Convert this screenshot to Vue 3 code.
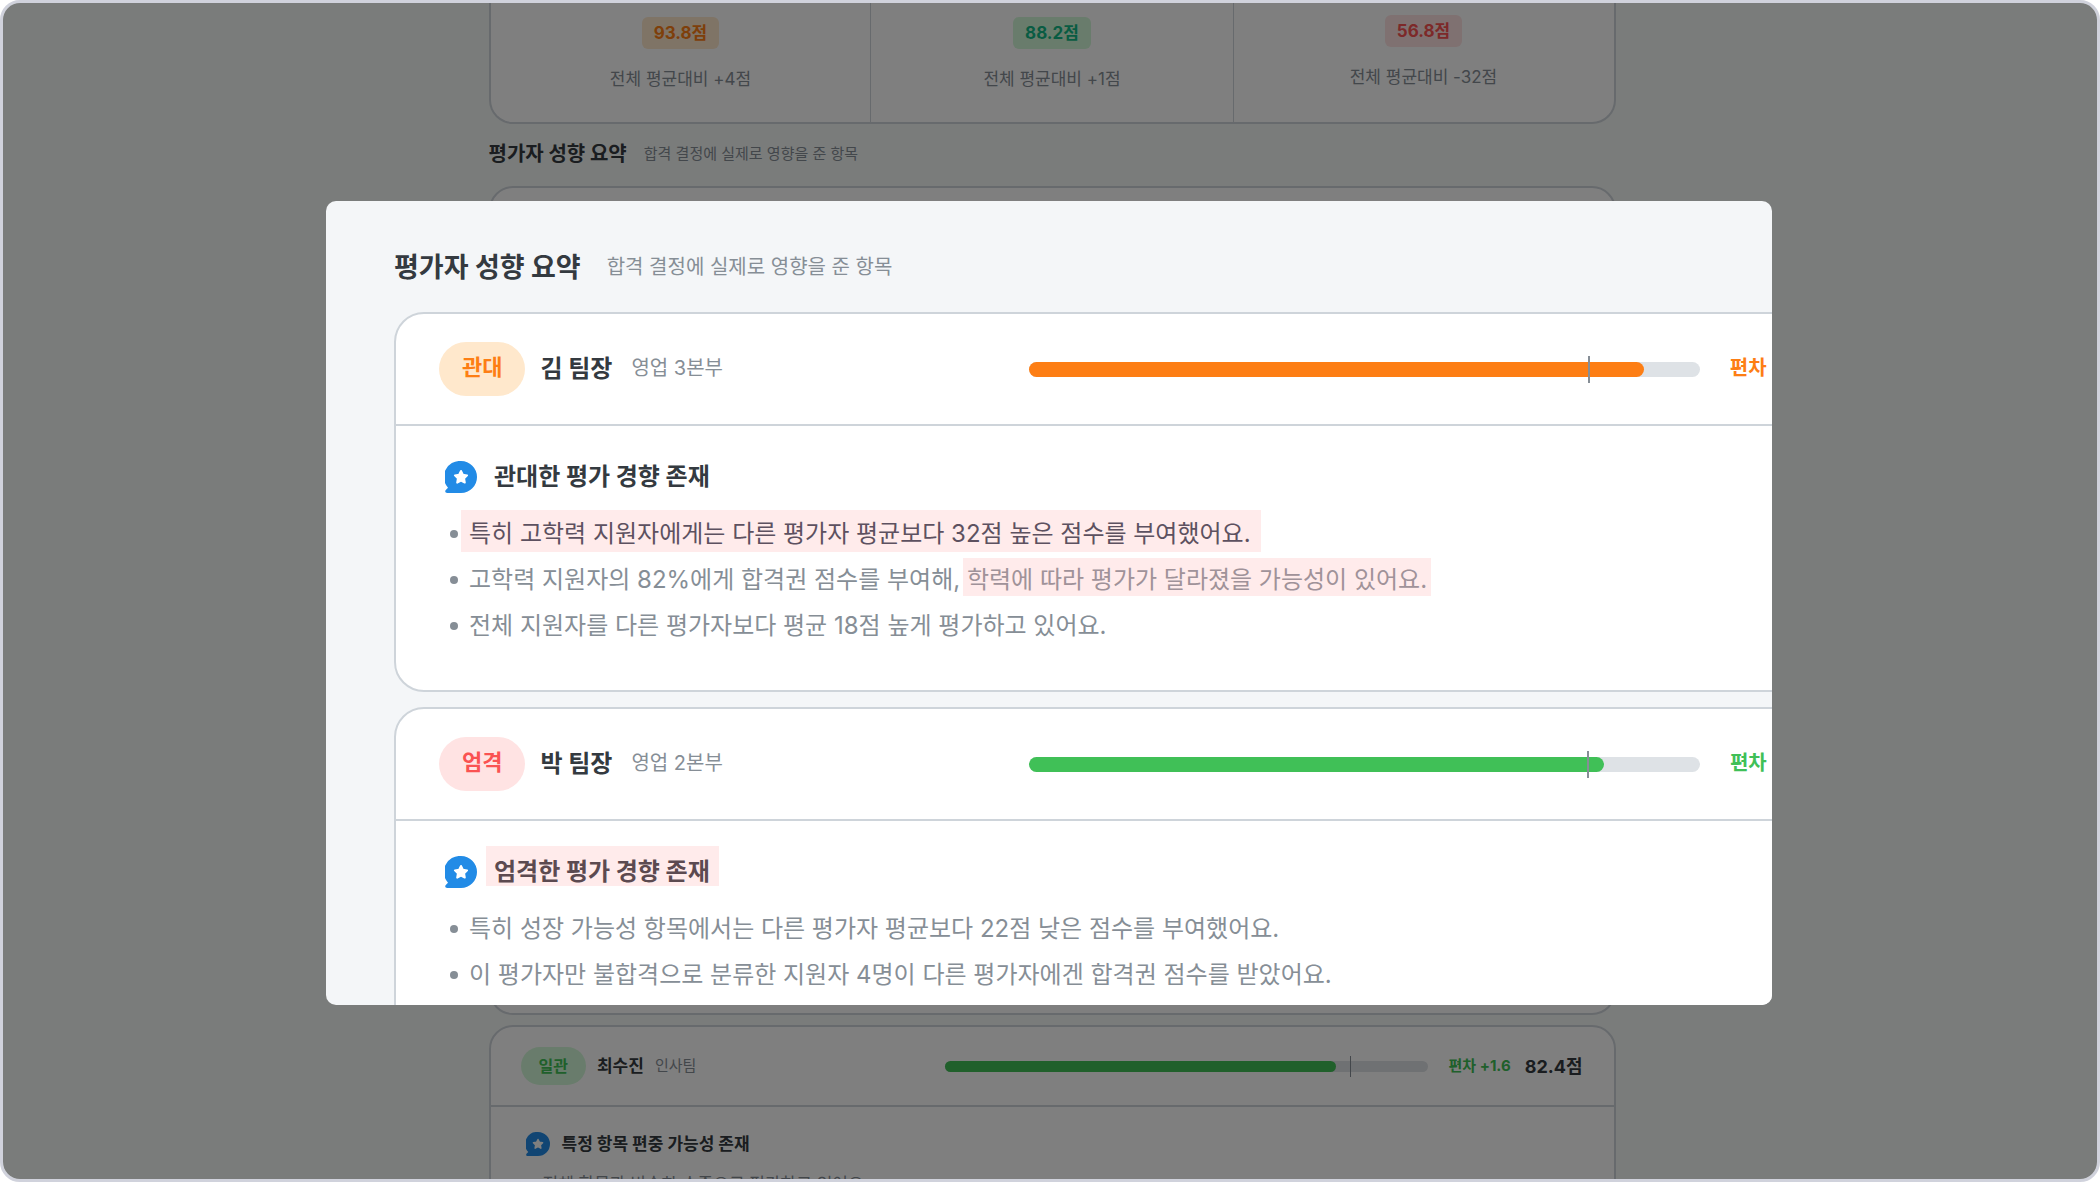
<template>
  <div class="screen">
    <div class="page">
      <div class="scores">
        <div v-for="item in scores" :key="item.score" class="score">
          <span class="chip" :class="item.color">{{ item.score }}점</span>
          <span class="diff">전체 평균대비 {{ item.diff }}점</span>
        </div>
      </div>

      <div class="heading">
        <h2>평가자 성향 요약</h2>
        <p>합격 결정에 실제로 영향을 준 항목</p>
      </div>

      <div class="card spacer"></div>

      <div class="card">
        <div class="card-head">
          <span class="tag green">일관</span>
          <strong class="name">최수진</strong>
          <span class="dept">인사팀</span>
          <div class="bar">
            <div class="fill green" :style="{ width: '81%' }"></div>
            <div class="avg" :style="{ left: '84%' }"></div>
          </div>
          <span class="gap green">편차 +1.6</span>
          <strong class="total">82.4점</strong>
        </div>
        <div class="card-body">
          <div class="title">
            <svg viewBox="0 0 32 32" aria-hidden="true">
              <path class="bubble" d="M16 0a16 16 0 1 1 0 32H2.300c-2 0-2.800-2-1.300-3.300l2-2A16 16 0 0 1 16 0z" />
              <path class="star" d="M16 10l1.900 3.800 4.200.6-3 3 .7 4.200L16 19.600l-3.800 2 .7-4.200-3-3 4.200-.6z" />
            </svg>
            <h3>특정 항목 편중 가능성 존재</h3>
          </div>
          <ul>
            <li>전체 항목과 비슷한 수준으로 평가하고 있어요.</li>
          </ul>
        </div>
      </div>
    </div>

    <div class="backdrop"></div>

    <div class="modal" role="dialog" aria-labelledby="modal-title">
      <div class="heading">
        <h2 id="modal-title">평가자 성향 요약</h2>
        <p>합격 결정에 실제로 영향을 준 항목</p>
      </div>

      <div v-for="rater in raters" :key="rater.name" class="card">
        <div class="card-head">
          <span class="tag" :class="rater.tagColor">{{ rater.tag }}</span>
          <strong class="name">{{ rater.name }}</strong>
          <span class="dept">{{ rater.dept }}</span>
          <div class="bar">
            <div class="fill" :class="rater.color" :style="{ width: rater.fill + '%' }"></div>
            <div class="avg" :style="{ left: rater.avg + '%' }"></div>
          </div>
          <span class="gap" :class="rater.color">편차 {{ rater.gap }}</span>
          <strong class="total">{{ rater.score }}점</strong>
        </div>
        <div class="card-body">
          <div class="title">
            <svg viewBox="0 0 32 32" aria-hidden="true">
              <path class="bubble" d="M16 0a16 16 0 1 1 0 32H2.300c-2 0-2.800-2-1.300-3.300l2-2A16 16 0 0 1 16 0z" />
              <path class="star" d="M16 10l1.900 3.800 4.200.6-3 3 .7 4.200L16 19.600l-3.800 2 .7-4.200-3-3 4.200-.6z" />
            </svg>
            <h3><mark v-if="rater.markTitle" class="strong">{{ rater.title }}</mark><template v-else>{{ rater.title }}</template></h3>
          </div>
          <ul>
            <li v-for="line in rater.lines" :key="line.text + line.mark">
              <span>{{ line.text }}<mark v-if="line.mark" :class="{ strong: line.strong }">{{ line.mark }}</mark></span>
            </li>
          </ul>
        </div>
      </div>
    </div>
  </div>
</template>

<script setup>
import { ref } from 'vue';

const scores = ref([
  { score: '93.8', diff: '+4', color: 'orange' },
  { score: '88.2', diff: '+1', color: 'teal' },
  { score: '56.8', diff: '-32', color: 'red' },
]);

const raters = ref([
  {
    tag: '관대',
    tagColor: 'orange',
    name: '김 팀장',
    dept: '영업 3본부',
    color: 'orange',
    fill: 91.7,
    avg: 83.4,
    gap: '+8.3',
    score: '91.7',
    title: '관대한 평가 경향 존재',
    lines: [
      { text: '', mark: '특히 고학력 지원자에게는 다른 평가자 평균보다 32점 높은 점수를 부여했어요.', strong: true },
      { text: '고학력 지원자의 82%에게 합격권 점수를 부여해, ', mark: '학력에 따라 평가가 달라졌을 가능성이 있어요.' },
      { text: '전체 지원자를 다른 평가자보다 평균 18점 높게 평가하고 있어요.' },
    ],
  },
  {
    tag: '엄격',
    tagColor: 'red',
    name: '박 팀장',
    dept: '영업 2본부',
    color: 'green',
    fill: 85.7,
    avg: 83.2,
    gap: '-2.3',
    score: '85.7',
    title: '엄격한 평가 경향 존재',
    markTitle: true,
    lines: [
      { text: '특히 성장 가능성 항목에서는 다른 평가자 평균보다 22점 낮은 점수를 부여했어요.' },
      { text: '이 평가자만 불합격으로 분류한 지원자 4명이 다른 평가자에겐 합격권 점수를 받았어요.' },
    ],
  },
]);
</script>

<style>
body {
  background: #fff;
}
</style>

<style scoped>
.screen {
  position: relative;
  box-sizing: border-box;
  height: 100vh;
  border: 3px solid #d0d2dc;
  border-radius: 20px;
  overflow: hidden;
  background: #f4f8f6;
  color: #343a40;
  font-family: Inter, 'Noto Sans CJK KR', sans-serif;
}

h2, h3, p, ul {
  margin: 0;
  padding: 0;
}

.page {
  width: 1127px;
  margin: 0 auto;
  padding-left: 4px;
}

.scores {
  display: grid;
  grid-template-columns: 381fr 363fr 382fr;
  height: 121px;
  box-sizing: border-box;
  border: 2px solid #ced4da;
  border-top: 0;
  border-radius: 0 0 24px 24px;
  background: #fff;
}

.score {
  display: flex;
  flex-direction: column;
  align-items: center;
  gap: 17px;
  padding-top: 14px;
  font-size: 17px;
  line-height: 26px;
}

.score + .score {
  border-left: 1px solid #ced4da;
}

.score:last-child {
  padding-top: 12px;
}

.chip {
  padding: 3px 12px;
  border-radius: 6px;
  font-weight: 700;
}

.diff {
  color: #868e96;
}

.heading {
  display: flex;
  align-items: center;
  white-space: nowrap;
}

.heading p {
  color: #868e96;
}

.page .heading {
  box-sizing: border-box;
  gap: 17px;
  height: 62px;
  padding-bottom: 6px;
}

.page .heading h2 {
  font-size: 20px;
}

.page .heading p {
  font-size: 15px;
}

.card {
  box-sizing: border-box;
  border: 2px solid #ced4da;
  border-radius: 24px;
  background: #fff;
}

.spacer {
  height: 829px;
  margin-bottom: 10px;
}

.card-head {
  display: flex;
  align-items: center;
  height: 78px;
  padding: 0 31px 0 30px;
  border-bottom: 2px solid #ced4da;
  white-space: nowrap;
}

.tag {
  padding: 6px 18px;
  border-radius: 19px;
  font-size: 16px;
  line-height: 26px;
  font-weight: 700;
}

.name {
  margin: 0 11px;
  font-size: 17px;
}

.dept {
  color: #868e96;
  font-size: 15px;
}

.name,
.dept,
.gap,
.total {
  padding-bottom: 3px;
}

.bar {
  position: relative;
  width: 483px;
  height: 11px;
  margin-left: auto;
  border-radius: 8px;
  background: #dee2e6;
}

.fill {
  height: 100%;
  border-radius: 8px;
}

.avg {
  position: absolute;
  top: -5px;
  bottom: -5px;
  width: 1px;
  background: #868e96;
}

.gap {
  margin: 0 14px 0 21px;
  font-size: 15px;
  font-weight: 700;
}

.total {
  font-size: 18px;
}

.card-body {
  padding: 24px 35px;
}

.title {
  display: flex;
  align-items: center;
  gap: 12px;
}

.title svg {
  width: 24px;
  height: 24px;
}

.title h3 {
  font-size: 17px;
  line-height: 26px;
}

.bubble {
  fill: #228be6;
}

.star {
  fill: #fff;
  stroke: #fff;
  stroke-width: 2;
  stroke-linejoin: round;
}

ul {
  list-style: none;
  color: #868e96;
  font-size: 17px;
  white-space: nowrap;
}

li {
  display: flex;
  align-items: center;
  line-height: 34px;
}

.page ul {
  margin-top: 10px;
}

li::before {
  content: '';
  width: 8px;
  height: 8px;
  margin-right: 11px;
  border-radius: 50%;
  background: #868e96;
}

.page li::before {
  width: 6px;
  height: 6px;
}

mark {
  margin: 0 -4px;
  padding: 7px 4px 2px;
  background: #ffebeb;
  color: #a09299;
}

mark.strong {
  margin: 0 -8px;
  padding: 9px 10px 4px 8px;
  color: #5d5160;
}

h3 mark.strong {
  padding: 11px 9px 0 8px;
  color: #5c4a50;
}

.fill.orange {
  background: #fd7e14;
}

.fill.green {
  background: #40c057;
}

.gap.orange {
  color: #fd7e14;
}

.gap.green {
  color: #40c057;
}

.tag.orange,
.chip.orange {
  background: #ffe8cc;
  color: #fd7e14;
}

.tag.red,
.chip.red {
  background: #ffe3e3;
  color: #fa5252;
}

.tag.green {
  background: #d3f9d8;
  color: #40c057;
}

.chip.teal {
  background: #d3f9d8;
  color: #12b886;
}

.backdrop {
  position: absolute;
  inset: 0;
  background: rgba(0, 0, 0, 0.5);
}

.modal {
  position: absolute;
  top: 198px;
  left: 50%;
  box-sizing: border-box;
  width: 1446px;
  height: 804px;
  margin-left: -724px;
  padding: 41px 0 0 68px;
  border-radius: 10px;
  overflow: hidden;
  background: #f4f6f8;
}

.modal .heading {
  gap: 26px;
  height: 46px;
  margin-bottom: 24px;
}

.modal .heading h2 {
  font-size: 27px;
}

.modal .heading p {
  font-size: 20px;
}

.modal .card {
  width: 1567px;
  height: 380px;
  margin-bottom: 15px;
  border-radius: 30px;
}

.modal .card-head {
  height: 110px;
  padding: 0 43px;
}

.modal .tag {
  padding: 9px 23px 13px;
  border-radius: 27px;
  font-size: 22px;
  line-height: 32px;
}

.modal .name,
.modal .dept,
.modal .gap,
.modal .total {
  padding-bottom: 6px;
}

.modal .name {
  margin: 0 19px 0 15px;
  font-size: 24px;
}

.modal .dept {
  font-size: 20px;
}

.modal .bar {
  width: 671px;
  height: 15px;
}

.modal .avg {
  top: -6px;
  bottom: -6px;
  width: 2px;
}

.modal .gap {
  margin: 0 30px;
  font-size: 20px;
}

.modal .total {
  font-size: 24px;
}

.modal .card-body {
  padding: 35px 49px 0;
}

.modal .title {
  gap: 17px;
}

.modal .title svg {
  width: 32px;
  height: 32px;
}

.modal .title h3 {
  font-size: 24px;
  line-height: 32px;
}

.modal ul {
  margin: 18px 0 0 5px;
  font-size: 24px;
}

.modal li {
  line-height: 46px;
}
</style>
